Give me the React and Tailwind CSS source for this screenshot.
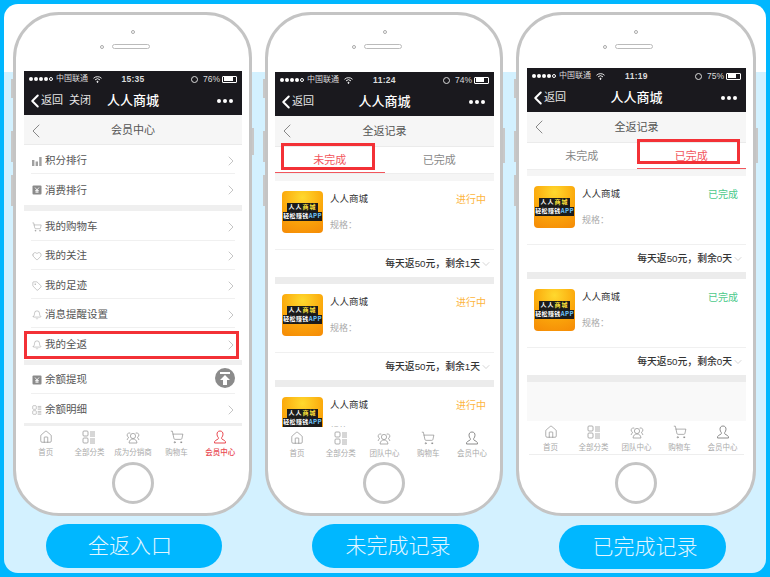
import { Bell, ChevronDown, ChevronLeft, ChevronRight, Heart, ShoppingCart, Tag, House } from 'lucide-react'

const font = "font-['Liberation_Sans','Noto_Sans_CJK_SC',sans-serif]"

const YenBox = () => (
  <svg width="10" height="10" viewBox="0 0 10 10">
    <rect x="0.5" y="0.5" width="9" height="9" rx="1" fill="#8a8a8a" />
    <path d="M3 2.5 5 5l2-2.5M5 5v3M3.2 5.5h3.6M3.2 7h3.6" stroke="#fff" strokeWidth="0.8" fill="none" />
  </svg>
)

const Bars = () => (
  <svg width="10" height="10" viewBox="0 0 10 10" fill="#a0a0a0">
    <rect x="0" y="4" width="2.4" height="6" />
    <rect x="3.6" y="5.5" width="2.4" height="4.5" />
    <rect x="7.2" y="1" width="2.4" height="9" />
  </svg>
)

const GridList = ({ size = 10 }) => (
  <svg width={size} height={size} viewBox="0 0 14 14" fill="none" stroke="#9a9a9a" strokeWidth="0.8">
    <rect x="1" y="1" width="5" height="5" rx="1" />
    <rect x="1" y="8" width="5" height="5" rx="1" />
    <path d="M8 2h5M8 4h5M8 6h5M8 9h5M8 11h5M8 13h5" />
  </svg>
)

const Team = () => (
  <svg width="14" height="14" viewBox="0 0 14 14" fill="none" stroke="#9a9a9a" strokeWidth="0.8">
    <circle cx="7" cy="6" r="2.6" />
    <path d="M3 13c.4-3 2-4 4-4s3.600 1 4 4z" />
    <path d="M4.400 3.200A2.200 2.200 0 1 0 2.600 7.200L1 10M9.600 3.200a2.200 2.200 0 1 1 1.800 4L13 10" />
  </svg>
)

const Person = ({ color = '#8c8c8c' }) => (
  <svg width="14" height="14" viewBox="0 0 14 14" fill="none" stroke={color} strokeWidth="1">
    <path d="M7 1c-2 0-3 1.400-3 3.200 0 1.500.6 2.500 1.300 3.300.3.500.2 1.300-.4 1.700L2.500 10.500c-.8.500-1 1.200-1 2.500h11c0-1.300-.2-2-1-2.500L9.100 9.200c-.6-.4-.7-1.200-.4-1.700C9.400 6.700 10 5.700 10 4.200 10 2.400 9 1 7 1z" />
  </svg>
)

const Signal = () => (
  <span className="flex items-center gap-[1px]">
    {[0, 1, 2, 3].map((i) => (
      <span key={i} className="w-[4px] h-[4px] rounded-full bg-white" />
    ))}
    <span className="w-[4px] h-[4px] rounded-full border-[0.5px] border-white" />
  </span>
)

const Wifi = () => (
  <svg width="9" height="7" viewBox="0 0 9 7" fill="none" stroke="#fff" strokeWidth="0.9">
    <path d="M.5 2.300a5.700 5.700 0 0 1 8 0M2 3.900a3.500 3.500 0 0 1 5 0" />
    <circle cx="4.500" cy="5.800" r="0.6" fill="#fff" />
  </svg>
)

const StatusBar = ({ time, pct, fill }) => (
  <div className="h-[16px] grid grid-cols-[1fr_auto_1fr] items-center px-[5px] text-[8.500px] text-[#dcdcdc]">
    <div className="flex items-center gap-[3px]">
      <Signal />
      <span className="text-[8px] whitespace-nowrap">中国联通</span>
      <span className="ml-[2px]"><Wifi /></span>
    </div>
    <span className="font-bold tracking-[0.3px]">{time}</span>
    <div className="flex items-center justify-end gap-[2px]">
      <span className="w-[7px] h-[7px] rounded-full border border-[#dcdcdc] mr-[3px]" />
      <span>{pct}</span>
      <span className="w-[15px] h-[7px] border-[0.5px] border-white rounded-[1px] p-[0.5px] flex">
        <span className={`h-full bg-white ${fill}`} />
      </span>
    </div>
  </div>
)

const NavBar = ({ close }) => (
  <div className="h-[28px] pb-[1px] grid grid-cols-[1fr_auto_1fr] items-center px-[9px] text-white">
    <div className="flex items-center -ml-[9px] text-[11px] text-[#e6e6e6]">
      <ChevronLeft size={22} strokeWidth={2.200} className="text-white -mr-[5px]" />
      <span>返回</span>
      {close && <span className="ml-[6px]">关闭</span>}
    </div>
    <span className="text-[13px] font-medium">人人商城</span>
    <div className="flex justify-end gap-[2px]">
      {[0, 1, 2].map((i) => (
        <span key={i} className="w-[4px] h-[4px] rounded-full bg-white" />
      ))}
    </div>
  </div>
)

const SubHeader = ({ title, h }) => (
  <div className={`${h} shrink-0 grid grid-cols-[1fr_auto_1fr] items-center bg-[#f6f6f6] border-b border-[#ebebeb] text-[11px] text-[#555]`}>
    <ChevronLeft size={24} strokeWidth={1} className="text-[#888]" />
    <span>{title}</span>
  </div>
)

const TabBar = ({ second, h, active, line }) => {
  const items = [
    { icon: <House size={14} strokeWidth={1} className="text-[#777]" />, label: '首页' },
    { icon: <GridList size={14} />, label: '全部分类' },
    { icon: <Team />, label: second },
    { icon: <ShoppingCart size={14} strokeWidth={1} className="text-[#777]" />, label: '购物车' },
    { icon: <Person color={active ? '#e9474f' : '#8c8c8c'} />, label: '会员中心', on: active },
  ]
  return (
    <div className={`${h} shrink-0 bg-white grid grid-cols-5 ${line}`}>
      {items.map((it) => (
        <div key={it.label} className="flex flex-col items-center pt-[4px]">
          {it.icon}
          <span className={`mt-[3px] text-[7.500px] whitespace-nowrap ${it.on ? 'text-[#e9474f] font-medium' : 'text-[#aaa]'}`}>{it.label}</span>
        </div>
      ))}
    </div>
  )
}

const Row = ({ icon, label }) => (
  <div className="h-[29.300px] pt-[3px] mx-[7px] flex items-center gap-[3px] border-b border-[#f0f0f0] last:border-b-0 text-[10.500px] text-[#555]">
    <span className="w-[11px] flex justify-center">{icon}</span>
    <span className="flex-1">{label}</span>
    <ChevronRight size={16} strokeWidth={1.100} className="text-[#b0b0b0] -mr-[4px]" />
  </div>
)

const MemberScreen = () => (
  <div className="flex-1 flex flex-col min-h-0 bg-white">
    <SubHeader title="会员中心" h="h-[30px] pt-[2px]" />
    <div className="flex-1 min-h-0 flex flex-col">
      <div>
        <Row icon={<Bars />} label="积分排行" />
        <Row icon={<YenBox />} label="消费排行" />
      </div>
      <div className="h-[7px] bg-[#efefef] mt-[1px]" />
      <div>
        <Row icon={<ShoppingCart size={10} strokeWidth={1.100} className="text-[#888]" />} label="我的购物车" />
        <Row icon={<Heart size={10} strokeWidth={1.100} className="text-[#888]" />} label="我的关注" />
        <Row icon={<Tag size={10} strokeWidth={1.100} className="text-[#888]" />} label="我的足迹" />
        <Row icon={<Bell size={10} strokeWidth={1.100} className="text-[#888]" />} label="消息提醒设置" />
        <Row icon={<Bell size={10} strokeWidth={1.100} className="text-[#888]" />} label="我的全返" />
      </div>
      <div className="h-[5px] bg-[#efefef] mt-[2px]" />
      <div>
        <Row icon={<YenBox />} label="余额提现" />
        <Row icon={<GridList />} label="余额明细" />
      </div>
      <div className="h-[3px] bg-[#efefef]" />
    </div>
    <TabBar second="成为分销商" h="h-[32px]" active />
  </div>
)

const Logo = () => (
  <div className="w-[41px] h-[42px] shrink-0 rounded-[4px] overflow-hidden bg-[radial-gradient(circle_at_50%_15%,#ffd92e,#fba90c_50%,#f58a06)] flex flex-col justify-center items-center font-bold font-['Noto_Sans_CJK_SC',sans-serif]">
    <span className="bg-[#1b1b1b] text-white text-[6px] leading-[8.700px] tracking-[1px] px-[1px] whitespace-nowrap">人人<span className="text-[#ffe23a]">商城</span></span>
    <span className="bg-[#1b1b1b] text-white text-[6px] leading-[8.700px] tracking-[0.4px] whitespace-nowrap">轻松赚钱<span className="text-[#6ec6ff]">APP</span></span>
  </div>
)

const RecordCard = ({ status, statusColor, left }) => (
  <div>
    <div className="h-[69px] flex pl-[7px] pr-[8px] pt-[10px] gap-[7px] border-b border-[#f0f0f0]">
      <Logo />
      <div className="flex-1 flex flex-col text-[9.500px] leading-none text-[#333] pt-[3px]">
        <span>人人商城</span>
        <span className="mt-[17px] text-[9px] text-[#aaa]">规格：</span>
      </div>
      <span className={`text-[10px] leading-none mt-[4px] ${statusColor}`}>{status}</span>
    </div>
    <div className="h-[27px] pt-[1px] flex items-center justify-end pr-[2px] text-[9.800px] font-medium text-[#333]">
      <span>每天返50元，剩余{left}天</span>
      <ChevronDown size={12} strokeWidth={1} className="text-[#aaa]" />
    </div>
  </div>
)

const RecordScreen = ({ done, bars }) => {
  const status = done ? '已完成' : '进行中'
  const color = done ? 'text-[#4cc98a]' : 'text-[#fdb53c]'
  const left = done ? 0 : 1
  return (
    <div className="flex-1 flex flex-col min-h-0 bg-white">
      <SubHeader title="全返记录" h="h-[31px]" />
      <div className="h-[27px] shrink-0 grid grid-cols-2 text-[11px] text-center border-b border-[#eee]">
        <span className={`flex items-center justify-center pt-[2px] border-b-[1.500px] ${done ? 'border-transparent text-[#888]' : 'border-[#f2555c] text-[#f2555c]'}`}>未完成</span>
        <span className={`flex items-center justify-center pt-[2px] border-b-[1.500px] ${done ? 'border-[#f2555c] text-[#f2555c]' : 'border-transparent text-[#888]'}`}>已完成</span>
      </div>
      <div className="flex-1 min-h-0 overflow-hidden bg-[#f9f9f9]">
        <div className={`${done ? 'h-[6px]' : 'h-[7px]'} bg-[#f5f5f5]`} />
        {bars.map((n, i) => (
          <div key={n}>
            <div className="bg-white"><RecordCard status={status} statusColor={color} left={left} /></div>
            {i < bars.length - 1 || done ? <div className="h-[7px] bg-[#ececec]" /> : null}
          </div>
        ))}
      </div>
      <TabBar second="团队中心" h={done ? 'h-[34px]' : 'h-[33px]'} line={done ? 'border-b border-[#eee] mx-[2px]' : ''} />
    </div>
  )
}

const Phone = ({ width, screenWrap, rightBtn, children, overlay }) => (
  <div className={`relative ${width} h-[504px] rounded-[46px] border-[3px] border-[#c4c4c4] bg-white`}>
    {/* side buttons */}
    <div className="absolute -left-[5px] top-[64px] w-[2px] h-[19px] bg-[#c8c8c8]" />
    <div className="absolute -left-[5px] top-[116px] w-[2px] h-[31px] bg-[#c8c8c8]" />
    <div className="absolute -left-[5px] top-[160px] w-[2px] h-[31px] bg-[#c8c8c8]" />
    <div className={`absolute -right-[5px] top-[113px] w-[2px] ${rightBtn} bg-[#c8c8c8]`} />
    {/* camera + speaker */}
    <div className="absolute left-[115px] top-[15px] w-[4px] h-[4px] rounded-full border-[0.5px] border-[#aaa]" />
    <div className="absolute left-[84px] top-[30px] w-[4px] h-[4px] rounded-full border-[0.5px] border-[#aaa]" />
    <div className="absolute left-[96px] top-[29px] w-[38px] h-[5px] rounded-full border border-[#bbb]" />
    <div className={`${screenWrap} flex flex-col`}>{children}</div>
    <div className="absolute left-1/2 -translate-x-1/2 bottom-[9px] w-[42px] h-[42px] rounded-full border-[3px] border-[#c4c4c4]" />
    {overlay}
  </div>
)

const Dark = ({ time, pct, fill, close }) => (
  <div className="bg-[#1a191e] shrink-0">
    <StatusBar time={time} pct={pct} fill={fill} />
    <NavBar close={close} />
  </div>
)

const Caption = ({ text, box }) => (
  <div className={`${box} h-[44px] rounded-[22px] bg-[#00b7ff] flex items-center justify-center text-[21px] font-light text-[#e3f6ff]`}>
    {text}
  </div>
)

export default function App() {
  return (
    <div className={`w-[770px] h-[577px] bg-[#00b7ff] pl-[4px] pt-[4px] ${font}`}>
      <div className="w-[762px] h-[569px] rounded-[14px] bg-[linear-gradient(#fff_68px,#d3f1ff_68px)] pl-[9px] pt-[8px] flex gap-[13px]">
        <div className="flex flex-col">
          <Phone
            width="w-[239px]"
            rightBtn="h-[27px]"
            screenWrap="ml-[8px] mr-[7px] mt-[56px] h-[387px]"
            overlay={
              <>
                <div className="absolute left-[8px] top-[316px] w-[215px] h-[28px] border-[3px] border-[#f33136]" />
                <div className="absolute left-[199px] top-[353px] w-[20px] h-[20px] rounded-full bg-[#8b8b8b] flex items-center justify-center">
                  <svg width="12" height="13" viewBox="0 0 12 13" fill="#fff">
                    <rect x="1" y="0" width="10" height="2" />
                    <path d="M6 3l5 5H8v5H4V8H1z" />
                  </svg>
                </div>
              </>
            }
          >
            <Dark time="15:35" pct="76%" fill="w-[75%]" close />
            <MemberScreen />
          </Phone>
          <Caption text="全返入口" box="mt-[8px] ml-[33px] w-[176px] pr-[8px]" />
        </div>
        <div className="flex flex-col">
          <Phone
            width="w-[238px]"
            rightBtn="h-[35px]"
            screenWrap="ml-[7px] mr-[6px] mt-[57px] h-[388px]"
            overlay={<div className="absolute left-[13px] top-[128px] w-[94px] h-[27px] border-[3px] border-[#f33136]" />}
          >
            <Dark time="11:24" pct="74%" fill="w-[72%]" />
            <RecordScreen bars={[1, 2, 3]} />
          </Phone>
          <Caption text="未完成记录" box="mt-[8px] ml-[47px] w-[167px] pl-[5px]" />
        </div>
        <div className="flex flex-col">
          <Phone
            width="w-[240px]"
            rightBtn="h-[35px]"
            screenWrap="ml-[8px] mr-[7px] mt-[53px] h-[387px]"
            overlay={<div className="absolute left-[118px] top-[124px] w-[103px] h-[25px] border-[3px] border-[#f33136]" />}
          >
            <Dark time="11:19" pct="75%" fill="w-[74%]" />
            <RecordScreen done bars={[1, 2]} />
          </Phone>
          <Caption text="已完成记录" box="mt-[9px] ml-[43px] w-[167px] pl-[5px]" />
        </div>
      </div>
    </div>
  )
}
